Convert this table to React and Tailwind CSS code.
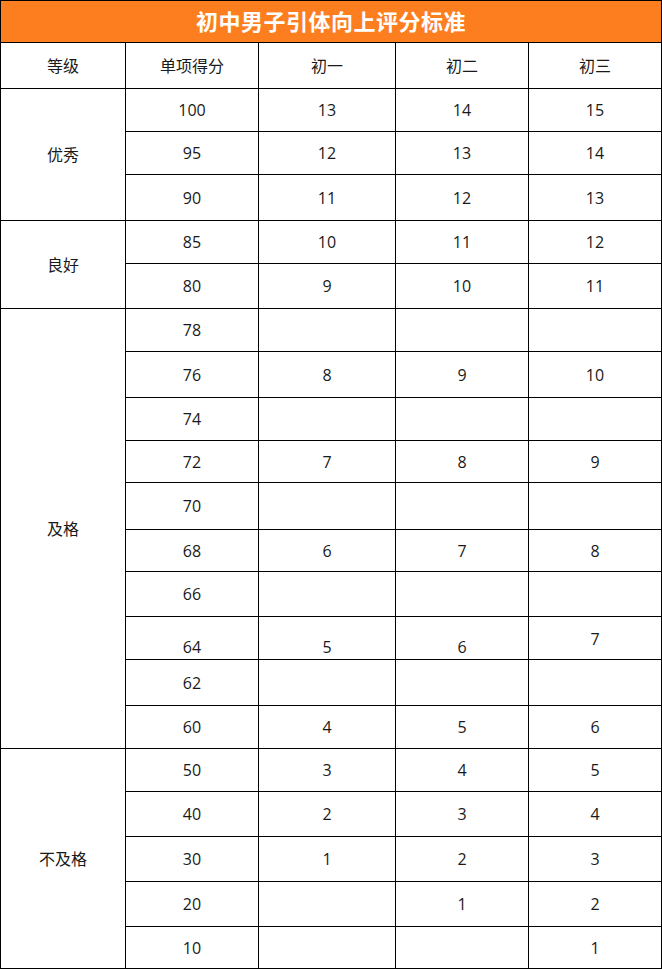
import React from "react";

const groups = [
  { label: "优秀", span: "row-span-3", rows: [["100", "13", "14", "15"], ["95", "12", "13", "14"], ["90", "11", "12", "13"]] },
  { label: "良好", span: "row-span-2", rows: [["85", "10", "11", "12"], ["80", "9", "10", "11"]] },
  {
    label: "及格",
    span: "row-span-10",
    rows: [
      ["78", "", "", ""],
      ["76", "8", "9", "10"],
      ["74", "", "", ""],
      ["72", "7", "8", "9"],
      ["70", "", "", ""],
      ["68", "6", "7", "8"],
      ["66", "", "", ""],
      ["64", "5", "6", "7", "low"],
      ["62", "", "", ""],
      ["60", "4", "5", "6"],
    ],
  },
  {
    label: "不及格",
    span: "row-span-5",
    rows: [
      ["50", "3", "4", "5"],
      ["40", "2", "3", "4"],
      ["30", "1", "2", "3"],
      ["20", "", "1", "2"],
      ["10", "", "", "1"],
    ],
  },
];

const cell = "flex items-center justify-center border-r border-b border-black";
const lowCell = "flex items-end justify-center pb-[0px] border-r border-b border-black";

export default function App() {
  return (
    <div
      className="w-[662px] h-[969px] bg-white text-[16px] text-[#1a1a1a]"
      style={{ fontFamily: '"Open Sans", "Noto Sans CJK SC", sans-serif' }}
    >
      <div className="grid grid-cols-[125px_133px_137px_133px_133px] grid-rows-[42px_46px_43px_43px_46px_43px_45px_43px_46px_43px_42px_47px_42px_45px_43px_46px_43px_43px_45px_45px_45px_42px] border-l border-t border-black">
        <div className="col-span-5 flex items-center justify-center bg-[#fd7e1f] border-r border-b border-black text-white text-[22px] font-bold tracking-[0.5px]">
          初中男子引体向上评分标准
        </div>
        <div className={cell}>等级</div>
        <div className={cell}>单项得分</div>
        <div className={cell}>初一</div>
        <div className={cell}>初二</div>
        <div className={cell}>初三</div>
        {groups.map((g) => (
          <React.Fragment key={g.label}>
            <div className={`${g.span} ${cell}`}>{g.label}</div>
            {g.rows.map((r) => (
              <React.Fragment key={r[0]}>
                <div className={r[4] ? lowCell : cell}>{r[0]}</div>
                <div className={r[4] ? lowCell : cell}>{r[1]}</div>
                <div className={r[4] ? lowCell : cell}>{r[2]}</div>
                <div className={r[4] ? "flex items-start justify-center pt-[10px] border-r border-b border-black" : cell}>{r[3]}</div>
              </React.Fragment>
            ))}
          </React.Fragment>
        ))}
      </div>
    </div>
  );
}
